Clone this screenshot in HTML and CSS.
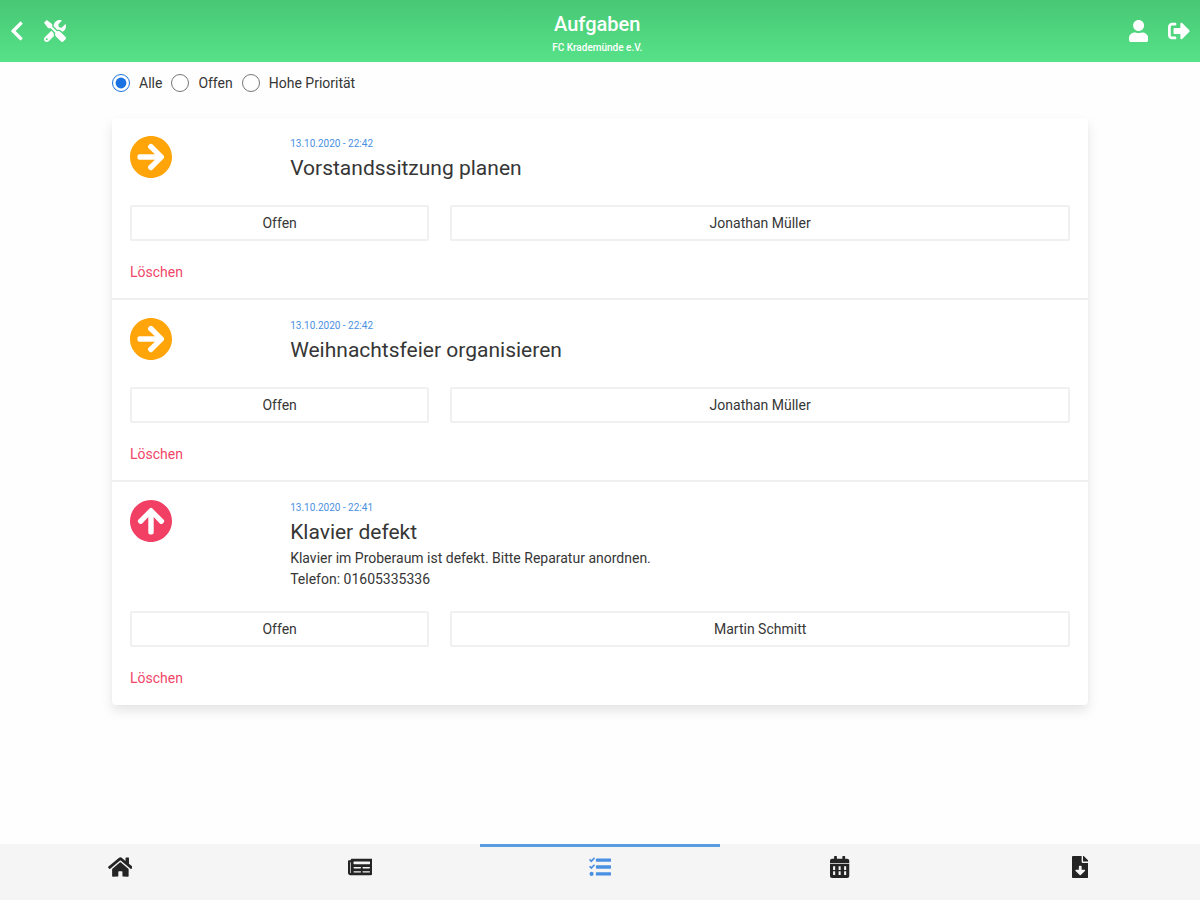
FILE: index.html
```html
<!DOCTYPE html>
<html lang="de">
<head>
    <meta charset="UTF-8">
    <meta name="viewport" content="width=device-width, initial-scale=1.0">
    <title>Aufgaben</title>
    <link rel="stylesheet" href="styles.css">
</head>
<body>
    <svg class="sprite" aria-hidden="true">
        <symbol id="arrow" viewBox="8 8 496 496">
            <path d="M256 8c137 0 248 111 248 248S393 504 256 504 8 393 8 256 119 8 256 8zm-28.900 143.600l75.500 72.400H120c-13.300 0-24 10.700-24 24v16c0 13.300 10.700 24 24 24h182.600l-75.500 72.400c-9.700 9.300-9.900 24.800-.4 34.300l11 10.900c9.400 9.400 24.600 9.400 33.900 0L404.300 273c9.400-9.400 9.400-24.600 0-33.900L271.600 106.300c-9.400-9.400-24.600-9.400-33.900 0l-11 10.900c-9.500 9.600-9.300 25.100.4 34.400z"/>
        </symbol>
    </svg>

    <header class="header">
        <div class="header-group">
            <a href="#" class="header-link" aria-label="Zurück">
                <svg class="icon" viewBox="0 0 320 512"><path d="M34.52 239.03L228.87 44.69c9.37-9.37 24.57-9.37 33.94 0l22.67 22.67c9.36 9.36 9.37 24.52.04 33.9L131.49 256l154.02 154.75c9.34 9.38 9.32 24.54-.04 33.9l-22.67 22.67c-9.37 9.37-24.57 9.37-33.94 0L34.52 272.97c-9.37-9.37-9.37-24.57 0-33.94z"/></svg>
            </a>
            <a href="#" class="header-link" aria-label="Werkzeuge">
                <svg class="icon" viewBox="0 0 512 512"><path d="M501.1 395.7L384 278.6c-23.1-23.1-57.6-27.6-85.4-13.9L192 158.1V96L64 0 0 64l96 128h62.1l106.6 106.6c-13.6 27.8-9.2 62.3 13.9 85.4l117.1 117.1c14.6 14.6 38.2 14.6 52.7 0l52.7-52.7c14.5-14.6 14.5-38.2 0-52.7zM331.7 225c28.3 0 54.9 11 74.9 31l19.4 19.4c15.8-6.9 30.8-16.5 43.8-29.5 37.1-37.1 49.7-89.3 37.9-136.7-2.2-9-13.5-12.1-20.1-5.5l-74.4 74.4-67.9-11.3L334 98.9l74.4-74.4c6.6-6.6 3.4-17.9-5.7-20.2-47.4-11.7-99.6.9-136.6 37.9-28.5 28.5-41.9 66.1-41.2 103.6l82.1 82.1c8.1-1.9 16.5-2.9 24.7-2.9zm-103.9 82l-56.7-56.7L18.7 402.8c-25 25-25 65.5 0 90.5s65.5 25 90.5 0l123.6-123.6c-7.6-19.9-9.900-41.600-5-62.700zM64 472c-13.200 0-24-10.800-24-24 0-13.300 10.700-24 24-24s24 10.700 24 24c0 13.200-10.700 24-24 24z"/></svg>
            </a>
        </div>
        <div class="header-title">
            <h1>Aufgaben</h1>
            <p>FC Krademünde e.V.</p>
        </div>
        <div class="header-group">
            <a href="#" class="header-link" aria-label="Profil">
                <svg class="icon" viewBox="0 0 448 512"><path d="M224 256c70.7 0 128-57.3 128-128S294.700 0 224 0 96 57.300 96 128s57.300 128 128 128zm89.600 32h-16.700c-22.200 10.200-46.900 16-72.900 16s-50.600-5.800-72.900-16h-16.700C60.200 288 0 348.200 0 422.400V464c0 26.500 21.500 48 48 48h352c26.500 0 48-21.500 48-48v-41.600c0-74.200-60.200-134.400-134.400-134.400z"/></svg>
            </a>
            <a href="#" class="header-link" aria-label="Abmelden">
                <svg class="icon" viewBox="0 0 512 512"><path d="M497 273L329 441c-15 15-41 4.500-41-17v-96H152c-13.300 0-24-10.700-24-24v-96c0-13.300 10.700-24 24-24h136V88c0-21.400 25.900-32 41-17l168 168c9.300 9.400 9.300 24.600 0 34zM192 436v-40c0-6.600-5.400-12-12-12H96c-17.700 0-32-14.300-32-32V160c0-17.700 14.300-32 32-32h84c6.600 0 12-5.400 12-12V76c0-6.600-5.400-12-12-12H96c-53 0-96 43-96 96v192c0 53 43 96 96 96h84c6.600 0 12-5.400 12-12z"/></svg>
            </a>
        </div>
    </header>

    <main class="container">
        <div class="filter">
            <input type="radio" name="filter" id="filter-all" checked>
            <label for="filter-all">Alle</label>
            <input type="radio" name="filter" id="filter-open">
            <label for="filter-open">Offen</label>
            <input type="radio" name="filter" id="filter-high">
            <label for="filter-high">Hohe Priorität</label>
        </div>

        <div class="tasks">
            <article class="task">
                <svg class="priority"><use href="#arrow"/></svg>
                <div class="task-text">
                    <p class="date">13.10.2020 - 22:42</p>
                    <h2>Vorstandssitzung planen</h2>
                </div>
                <button class="select-btn status">Offen</button>
                <button class="select-btn person">Jonathan Müller</button>
                <button class="delete-btn">Löschen</button>
            </article>

            <article class="task">
                <svg class="priority"><use href="#arrow"/></svg>
                <div class="task-text">
                    <p class="date">13.10.2020 - 22:42</p>
                    <h2>Weihnachtsfeier organisieren</h2>
                </div>
                <button class="select-btn status">Offen</button>
                <button class="select-btn person">Jonathan Müller</button>
                <button class="delete-btn">Löschen</button>
            </article>

            <article class="task">
                <svg class="priority priority-high"><use href="#arrow"/></svg>
                <div class="task-text">
                    <p class="date">13.10.2020 - 22:41</p>
                    <h2>Klavier defekt</h2>
                    <p>Klavier im Proberaum ist defekt. Bitte Reparatur anordnen.<br>Telefon: 01605335336</p>
                </div>
                <button class="select-btn status">Offen</button>
                <button class="select-btn person">Martin Schmitt</button>
                <button class="delete-btn">Löschen</button>
            </article>
        </div>
    </main>

    <nav class="tabs">
        <a href="#" class="tab" aria-label="Start">
            <svg class="icon" viewBox="0 0 576 512"><path d="M280.37 148.26L96 300.11V464a16 16 0 0 0 16 16l112.06-.29a16 16 0 0 0 15.92-16V368a16 16 0 0 1 16-16h64a16 16 0 0 1 16 16v95.64a16 16 0 0 0 16 16.05L464 480a16 16 0 0 0 16-16V300L295.67 148.26a12.19 12.19 0 0 0-15.3 0zM571.6 251.47L488 182.56V44.05a12 12 0 0 0-12-12h-56a12 12 0 0 0-12 12v72.61L318.47 43a48 48 0 0 0-61 0L4.34 251.47a12 12 0 0 0-1.6 16.9l25.5 31A12 12 0 0 0 45.15 301l235.22-193.74a12.19 12.19 0 0 1 15.3 0L530.9 301a12 12 0 0 0 16.9-1.6l25.5-31a12 12 0 0 0-1.7-16.93z"/></svg>
        </a>
        <a href="#" class="tab" aria-label="Neuigkeiten">
            <svg class="icon" viewBox="0 0 576 512"><path d="M552 64H88c-13.255 0-24 10.745-24 24v8H24c-13.255 0-24 10.745-24 24v272c0 30.928 25.072 56 56 56h472c26.51 0 48-21.49 48-48V88c0-13.255-10.745-24-24-24zM56 400a8 8 0 0 1-8-8V144h16v248a8 8 0 0 1-8 8zm236-16H140c-6.627 0-12-5.373-12-12v-8c0-6.627 5.373-12 12-12h152c6.627 0 12 5.373 12 12v8c0 6.627-5.373 12-12 12zm208 0H348c-6.627 0-12-5.373-12-12v-8c0-6.627 5.373-12 12-12h152c6.627 0 12 5.373 12 12v8c0 6.627-5.373 12-12 12zm-208-96H140c-6.627 0-12-5.373-12-12v-8c0-6.627 5.373-12 12-12h152c6.627 0 12 5.373 12 12v8c0 6.627-5.373 12-12 12zm208 0H348c-6.627 0-12-5.373-12-12v-8c0-6.627 5.373-12 12-12h152c6.627 0 12 5.373 12 12v8c0 6.627-5.373 12-12 12zm0-96H140c-6.627 0-12-5.373-12-12v-40c0-6.627 5.373-12 12-12h360c6.627 0 12 5.373 12 12v40c0 6.627-5.373 12-12 12z"/></svg>
        </a>
        <a href="#" class="tab active" aria-label="Aufgaben">
            <svg class="icon" viewBox="0 0 512 512"><path d="M176 56h320a16 16 0 0 1 16 16v48a16 16 0 0 1-16 16H176a16 16 0 0 1-16-16V72a16 16 0 0 1 16-16zM176 216h320a16 16 0 0 1 16 16v48a16 16 0 0 1-16 16H176a16 16 0 0 1-16-16v-48a16 16 0 0 1 16-16zM176 376h320a16 16 0 0 1 16 16v48a16 16 0 0 1-16 16H176a16 16 0 0 1-16-16v-48a16 16 0 0 1 16-16zM0 92l26-26 28 27 62-62 26 26-88 92zM0 252l26-26 28 27 62-62 26 26-88 92z"/><circle cx="60" cy="416" r="48"/></svg>
        </a>
        <a href="#" class="tab" aria-label="Kalender">
            <svg class="icon" viewBox="0 0 448 512"><path fill-rule="evenodd" d="M0 160v-48a48 48 0 0 1 48-48h48V12a12 12 0 0 1 12-12h40a12 12 0 0 1 12 12v52h128V12a12 12 0 0 1 12-12h40a12 12 0 0 1 12 12v52h48a48 48 0 0 1 48 48v48zM0 180h448v284a48 48 0 0 1-48 48H48a48 48 0 0 1-48-48zM72 236v92h48v-92zM200 236v92h48v-92zM328 236v92h48v-92zM72 352v92h48v-92zM200 352v92h48v-92zM328 352v92h48v-92z"/></svg>
        </a>
        <a href="#" class="tab" aria-label="Dateien">
            <svg class="icon" viewBox="0 0 384 512"><path d="M224 136V0H24C10.7 0 0 10.7 0 24v464c0 13.3 10.7 24 24 24h336c13.3 0 24-10.7 24-24V160H248c-13.2 0-24-10.8-24-24zm76.45 211.36l-96.42 95.7c-6.65 6.61-17.39 6.61-24.04 0l-96.42-95.7C73.42 337.29 80.54 320 94.82 320H160v-80c0-8.84 7.16-16 16-16h32c8.84 0 16 7.16 16 16v80h65.18c14.28 0 21.4 17.29 11.27 27.36zM377 105L279.1 7c-4.5-4.5-10.6-7-17-7H256v128h128v-6.1c0-6.3-2.5-12.4-7-16.9z"/></svg>
        </a>
    </nav>
</body>
</html>
```
FILE: styles.css
```css
* {
    box-sizing: border-box;
    margin: 0;
    padding: 0;
}
body {
    display: flex;
    flex-direction: column;
    min-height: 100vh;
    background-color: #fefefe;
    color: #363636;
    font-family: Roboto, "Liberation Sans", sans-serif;
    font-size: 14px;
    line-height: 21px;
}
button {
    font: inherit;
    cursor: pointer;
}
a {
    color: inherit;
}
.sprite {
    display: none;
}
.icon {
    display: block;
    height: 22px;
    fill: currentColor;
}
.header {
    display: flex;
    align-items: center;
    justify-content: space-between;
    height: 62px;
    padding: 0 10px;
    background: linear-gradient(#48c774, #56e288);
    color: white;
}
.header-group {
    display: flex;
    gap: 20px;
}
.header-title {
    padding-top: 6px;
    text-align: center;
}
.header-title h1 {
    font-size: 20px;
    font-weight: 500;
    line-height: 28px;
}
.header-title p {
    font-size: 10px;
    font-weight: 500;
    line-height: 20px;
}
.container {
    width: 100%;
    max-width: 1016px;
    margin: 0 auto;
    padding: 9px 20px 20px;
}
.filter {
    display: flex;
    align-items: center;
    height: 24px;
    margin-bottom: 23px;
}
.filter input {
    width: 18px;
    height: 18px;
    margin-right: 9px;
    accent-color: #1a73e0;
}
.filter label {
    margin-right: 9px;
}
.tasks {
    border-radius: 4px;
    background-color: white;
    box-shadow: 0 6px 12px rgba(10, 10, 10, 0.1), 0 0 2px rgba(10, 10, 10, 0.03);
}
.task {
    display: grid;
    grid-template-columns: repeat(6, 1fr);
    gap: 21px;
    padding: 18px 18px 15px;
    border-bottom: 2px solid #f0f0f0;
}
.task:last-child {
    padding-bottom: 16px;
    border-bottom: none;
}
.priority {
    width: 42px;
    height: 42px;
    fill: #ffa50a;
}
.priority-high {
    fill: #f14064;
    transform: rotate(-90deg);
}
.task-text {
    grid-column: span 5;
}
.task-text h2 {
    font-size: 21px;
    font-weight: 400;
    line-height: 32px;
}
.task-text .date {
    color: #4a90e2;
    font-size: 10px;
    line-height: 16px;
}
.select-btn {
    height: 36px;
    border: 2px solid #f0f0f0;
    border-radius: 2px;
    background-color: white;
    color: #363636;
}
.status {
    grid-column: span 2;
}
.person {
    grid-column: span 4;
}
.delete-btn {
    grid-column: 1 / -1;
    justify-self: start;
    border: none;
    background: none;
    color: #f14668;
}
.tabs {
    position: sticky;
    bottom: 0;
    display: flex;
    height: 56px;
    margin-top: auto;
    background-color: #f5f5f5;
}
.tab {
    display: flex;
    flex: 1;
    justify-content: center;
    padding-top: 9px;
    border-top: 3px solid transparent;
    color: #242424;
}
.tab.active {
    border-top-color: #5a9ce2;
    color: #4a90e2;
}
```
